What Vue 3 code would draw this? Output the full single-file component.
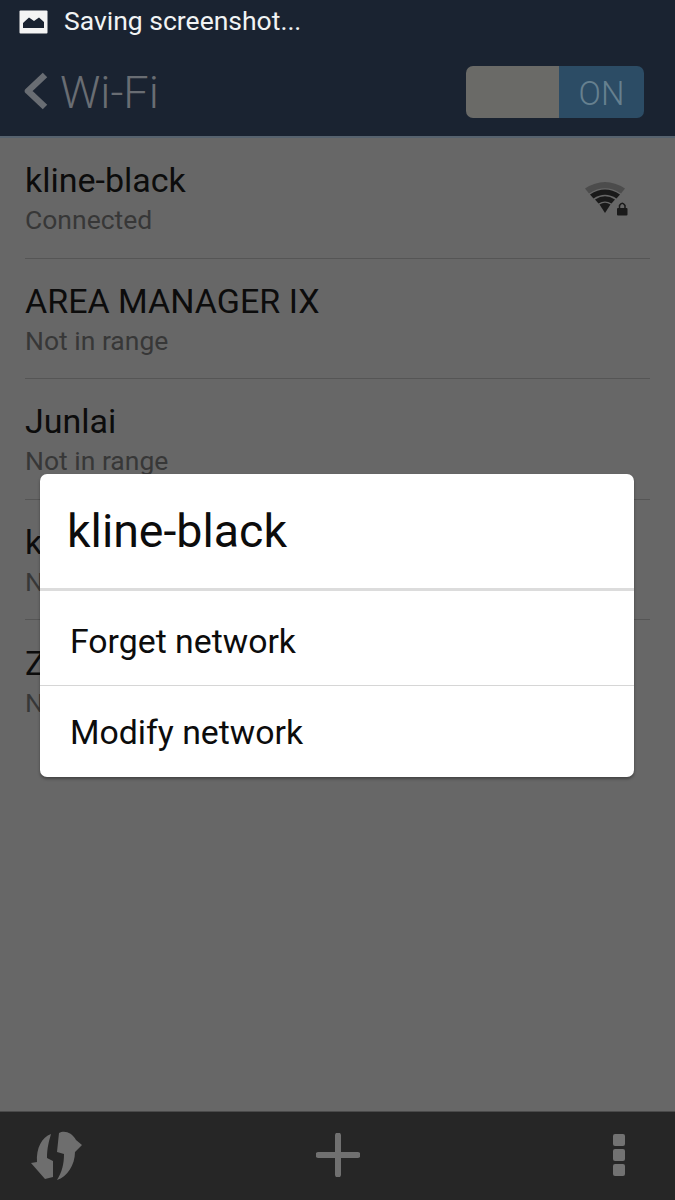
<script setup>
const networks = [
  { name: 'kline-black', status: 'Connected', signal: true },
  { name: 'AREA MANAGER IX', status: 'Not in range' },
  { name: 'Junlai', status: 'Not in range' },
  { name: 'kline', status: 'Not in range' },
  { name: 'ZTE', status: 'Not in range' },
];
</script>

<template>
  <div class="phone">
    <div class="statusBar">
      <svg class="shotIcon" width="29" height="24" viewBox="0 0 29 24">
        <path fill="#f4f4f4" d="M0.5 1.5Q0.5 0.5 1.500 0.5H27.5Q28.5 0.5 28.5 1.5V22.5Q28.5 23.5 27.5 23.5H1.5Q0.5 23.5 0.5 22.5Z" />
        <path fill="#1a2331" d="M4 18V13L10 7.5L15 11L20 7.5L25 12V18Z" />
      </svg>
      <span class="shotText">Saving screenshot...</span>
    </div>

    <div class="titleBar">
      <svg class="back" width="26" height="38" viewBox="0 0 26 38">
        <path d="M22 3L5 19L22 35" fill="none" stroke="#696d73" stroke-width="6.5" stroke-linejoin="round" />
      </svg>
      <span class="title">Wi-Fi</span>
      <div class="switch">
        <div class="switchOff"></div>
        <div class="switchOn">ON</div>
      </div>
    </div>
    <div class="titleEdge"></div>

    <div class="list">
      <div v-for="net in networks" :key="net.name" class="row">
        <div class="rowText">
          <div class="name">{{ net.name }}</div>
          <div class="status">{{ net.status }}</div>
        </div>
        <svg v-if="net.signal" class="wifi" width="44" height="36" viewBox="0 0 44 36">
          <path d="M1 8.5Q21 -4.5 41 8.5L37 13.5Q21 3 5 13.5Z" fill="#4c4c4c" />
          <path d="M6 14.5Q21 4.5 36 14.5L32.5 18.5Q21 11 9.5 18.5Z" fill="#1a1a1a" />
          <path d="M11 19.5Q21 13 31 19.5L27.5 23.5Q21 19.5 14.5 23.5Z" fill="#1a1a1a" />
          <path d="M15.5 24.5Q21 21 26.5 24.5L21 33Z" fill="#1a1a1a" />
          <rect x="33" y="28" width="10.500" height="7.500" rx="1" fill="#1a1a1a" />
          <path d="M35.5 28V25.5Q38.2 21 41 25.500V28" fill="none" stroke="#1a1a1a" stroke-width="1.5" />
        </svg>
      </div>
    </div>

    <div class="bottomBar">
      <svg class="sync" width="70" height="70" viewBox="0 0 70 70">
        <path fill="#6e6e6e" d="M31 14C22 17 16 28 17 42L11 43L25 59L33 57L33 41L27 38C27 28 29 21 31 14Z" />
        <path fill="#6e6e6e" d="M39 13C44 10 52 12 56 20L62 25L55 32C55 45 47 57 37 60C42 52 44 44 44 34L37 32Z" />
      </svg>
      <svg class="plus" width="44" height="44" viewBox="0 0 44 44">
        <path d="M22 2.5V41.5M2.5 22H41.5" stroke="#707070" stroke-width="6" stroke-linecap="round" />
      </svg>
      <div class="dots">
        <i></i><i></i><i></i>
      </div>
    </div>

    <div class="dialog">
      <div class="dialogTitle">kline-black</div>
      <div class="dialogItem first">Forget network</div>
      <div class="dialogItem last">Modify network</div>
    </div>
  </div>
</template>

<style scoped>
.phone {
  position: relative;
  width: 675px;
  height: 1200px;
  display: flex;
  flex-direction: column;
  overflow: hidden;
  background: #676767;
  font-family: Roboto, "Noto Sans", sans-serif;
}

.statusBar {
  height: 46px;
  display: flex;
  align-items: center;
  padding-left: 19px;
  background: #1a2331;
  flex-shrink: 0;
}

.shotIcon {
  margin-right: 16px;
  margin-top: -2px;
}

.shotText {
  color: #f1f3f4;
  font-size: 26.5px;
  margin-top: -5px;
}

.titleBar {
  height: 90px;
  display: flex;
  align-items: center;
  padding: 0 31px 0 23px;
  background: #1a2331;
  flex-shrink: 0;
}

.back {
  margin-right: 11px;
}

.title {
  color: #696d73;
  font-size: 45px;
  font-weight: 300;
  flex: 1;
  padding-top: 2px;
}

.switch {
  width: 178px;
  height: 52px;
  margin-top: 2px;
  display: flex;
  border-radius: 7px;
  overflow: hidden;
}

.switchOff {
  width: 93px;
  background: #6a6a67;
}

.switchOn {
  flex: 1;
  background: #2c4c65;
  color: #66808f;
  font-size: 33px;
  font-weight: 300;
  display: flex;
  align-items: center;
  justify-content: center;
  padding-top: 3px;
}

.titleEdge {
  height: 2px;
  background: #56626e;
  flex-shrink: 0;
}

.list {
  flex: 1;
  padding: 0 25px;
}

.row {
  height: 120.5px;
  box-sizing: border-box;
  display: flex;
  align-items: center;
  justify-content: space-between;
  border-bottom: 1px solid #555555;
}

.row:last-child {
  border-bottom: none;
}

.rowText {
  margin-top: 2px;
}

.name {
  color: #0c0c0c;
  font-size: 34px;
  line-height: 42px;
}

.status {
  color: #373737;
  font-size: 26.5px;
  line-height: 37px;
}

.wifi {
  margin-right: 22px;
}

.bottomBar {
  height: 88px;
  display: grid;
  grid-template-columns: 1fr auto 1fr;
  align-items: center;
  background: #262626;
  border-top: 1px solid #4a4a4a;
  flex-shrink: 0;
}

.sync {
  margin-left: 20px;
  margin-top: -2px;
}

.plus {
  margin-top: -2px;
}

.dots {
  justify-self: end;
  margin-right: 50px;
  display: flex;
  flex-direction: column;
  gap: 3px;
  margin-top: -2px;
}

.dots i {
  width: 12px;
  height: 12px;
  border-radius: 2px;
  background: #727272;
}

.dialog {
  position: absolute;
  left: 40px;
  top: 474px;
  width: 594px;
  height: 303px;
  background: #fff;
  border-radius: 7px;
  box-shadow: 0 2px 3px rgba(0, 0, 0, 0.35);
  color: #0c0c0c;
}

.dialogTitle {
  height: 114px;
  padding-left: 27px;
  display: flex;
  align-items: center;
  font-size: 46.5px;
  border-bottom: 3px solid #dcdcdc;
}

.dialogItem {
  height: 91px;
  padding-left: 30px;
  display: flex;
  align-items: center;
  font-size: 33.8px;
}

.dialogItem.first {
  height: 95px;
  padding-top: 6px;
  border-bottom: 1px solid #d6d6d6;
  box-sizing: border-box;
}

.dialogItem.last {
  padding-top: 2px;
  box-sizing: border-box;
}
</style>
